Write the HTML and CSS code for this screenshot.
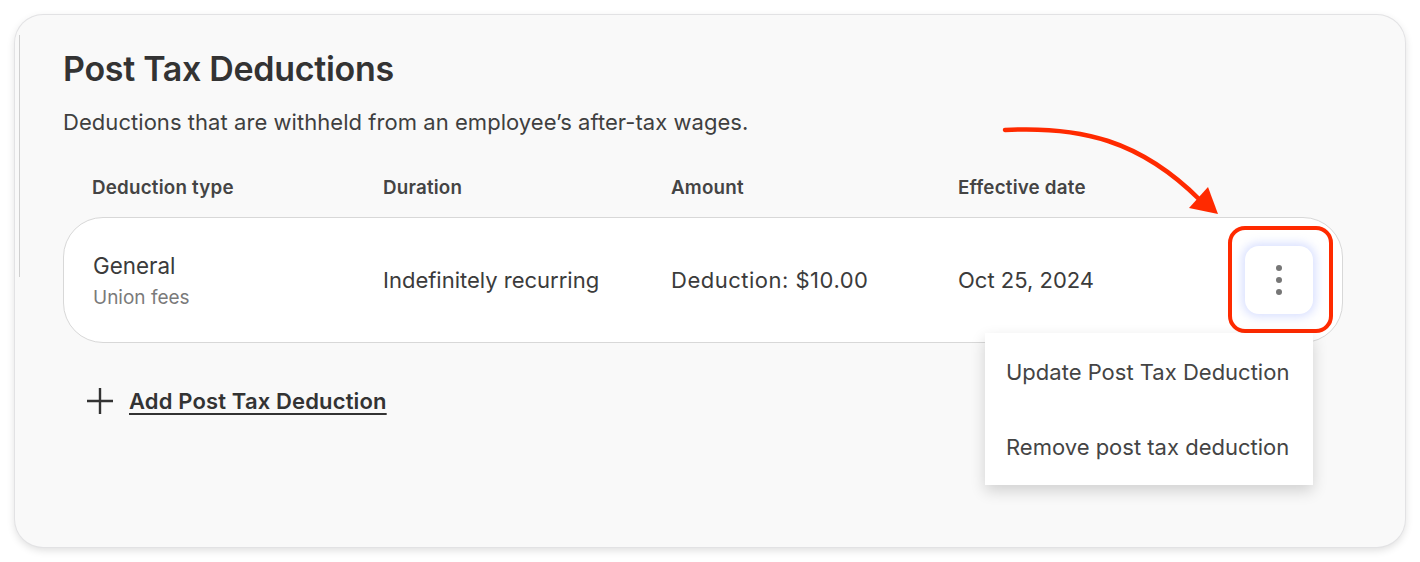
FILE: index.html
```html
<!DOCTYPE html>
<html lang="en">
<head>
<meta charset="utf-8">
<title>Post Tax Deductions</title>
<link rel="stylesheet" href="styles.css">
</head>
<body>
<section class="card">
  <h1 class="title">Post Tax Deductions</h1>
  <p class="subtitle">Deductions that are withheld from an employee’s after-tax wages.</p>
  <div class="head-row">
    <span>Deduction type</span>
    <span>Duration</span>
    <span>Amount</span>
    <span>Effective date</span>
  </div>
  <div class="row">
    <div class="cell type">
      <span class="type-name">General</span>
      <span class="type-sub">Union fees</span>
    </div>
    <div class="cell">Indefinitely recurring</div>
    <div class="cell amount">Deduction: $10.00</div>
    <div class="cell">Oct 25, 2024</div>
    <div class="menu-wrap">
      <button class="menu-btn" aria-label="More actions">
        <span class="dot"></span><span class="dot"></span><span class="dot"></span>
      </button>
      <div class="highlight"></div>
      <ul class="menu">
        <li>Update Post Tax Deduction</li>
        <li>Remove post tax deduction</li>
      </ul>
    </div>
  </div>
  <a class="add" href="#">
    <svg class="plus" width="30" height="30" viewBox="0 0 30 30"><path d="M15 2v26M2 15h26" stroke="#333" stroke-width="2.4" fill="none"/></svg>
    <span>Add Post Tax Deduction</span>
  </a>
</section>
<svg class="arrow" width="1420" height="562" viewBox="0 0 1420 562">
  <path d="M1005 130 C1080 126 1140 140 1200 200" stroke="#ff2a00" stroke-width="4.5" fill="none" stroke-linecap="round"/>
  <polygon points="1218,214 1189,208 1208,187" fill="#ff2a00"/>
</svg>
</body>
</html>
```
FILE: styles.css
```css
* { box-sizing: border-box; }
html, body { margin: 0; padding: 0; }
body {
  background: #ffffff;
  font-family: Inter, "Noto Sans", "Liberation Sans", sans-serif;
  color: #3b3b3b;
  position: relative;
  width: 1420px;
  height: 562px;
  overflow: hidden;
}
.card {
  position: relative;
  margin: 15px;
  height: 532px;
  background: #f9f9f9;
  border-radius: 28px;
  box-shadow: 0 0 0 1px #e2e2e4, 0 3px 8px rgba(0,0,0,0.14);
  padding: 34px 62px 0 48px;
}
.card::before {
  content: "";
  position: absolute;
  left: 4px;
  top: 20px;
  width: 1px;
  height: 242px;
  background: #cfcfcf;
}
.title {
  margin: 0;
  font-size: 34px;
  line-height: 40px;
  font-weight: 600;
  color: #333;
  letter-spacing: -0.3px;
}
.subtitle {
  margin: 19px 0 0;
  font-size: 22px;
  line-height: 28px;
  color: #3f3f3f;
  letter-spacing: 0.05px;
}
.head-row {
  margin-top: 40px;
  display: grid;
  grid-template-columns: 291px 288px 287px 1fr;
  padding-left: 29px;
  font-size: 18.8px;
  line-height: 24px;
  font-weight: 600;
  color: #444;
  letter-spacing: 0.2px;
}
.row {
  margin-top: 17px;
  height: 126px;
  background: #fff;
  border: 1px solid #d8d8d8;
  border-radius: 40px;
  display: grid;
  grid-template-columns: 290px 288px 287px 1fr auto;
  align-items: center;
  padding: 0 29px 0 29px;
}
.cell {
  font-size: 22px;
  line-height: 28px;
  color: #3b3b3b;
}
.amount { letter-spacing: 0.5px; }
.type { display: flex; flex-direction: column; padding: 4px 0 2px; }
.type-name { font-size: 22.4px; line-height: 30px; color: #3b3b3b; }
.type-sub { font-size: 19px; line-height: 26px; color: #7a7a7a; margin-top: 4px; }
.menu-wrap { position: relative; width: 68px; height: 68px; }
.menu-btn {
  width: 68px;
  height: 68px;
  border: none;
  border-radius: 14px;
  background: #fff;
  box-shadow: 0 0 10px 3px rgba(120,145,255,0.28);
  display: flex;
  flex-direction: column;
  align-items: center;
  justify-content: center;
  gap: 6px;
  padding: 0;
}
.dot { width: 6px; height: 6px; border-radius: 50%; background: #767676; }
.highlight {
  position: absolute;
  left: -17px;
  top: -20px;
  width: 105px;
  height: 107px;
  border: 4px solid #ff2a00;
  border-radius: 17px;
}
.menu {
  position: absolute;
  right: 0;
  top: 87px;
  width: 328px;
  margin: 0;
  padding: 0;
  list-style: none;
  background: #fff;
  box-shadow: 0 6px 14px rgba(0,0,0,0.16);
  z-index: 2;
}
.menu li {
  height: 76px;
  padding-left: 21px;
  display: flex;
  align-items: center;
  font-size: 22px;
  color: #444;
  white-space: nowrap;
}
.menu li:first-child { padding-top: 1px; }
.add {
  margin-top: 43px;
  margin-left: 22px;
  display: inline-flex;
  align-items: center;
  gap: 14px;
  color: #333;
  font-size: 22px;
  line-height: 28px;
  font-weight: 600;
  letter-spacing: 0.15px;
  text-decoration: none;
}
.add span { text-decoration: underline; text-underline-offset: 4px; text-decoration-thickness: 2px; }
.arrow { position: absolute; left: 0; top: 0; pointer-events: none; }
```
